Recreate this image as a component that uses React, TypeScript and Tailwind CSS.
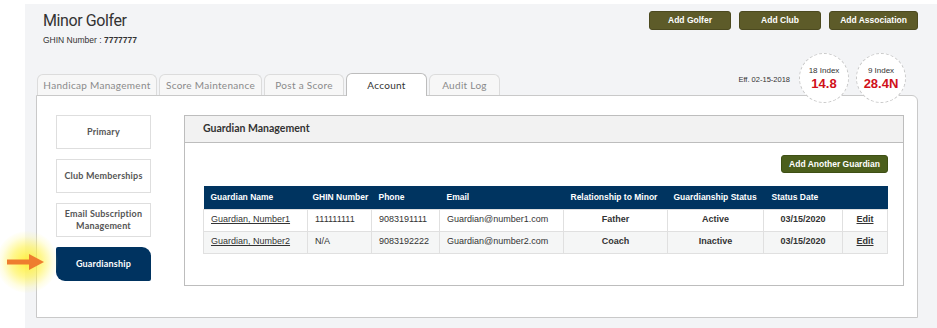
import React from 'react';

const sans = { fontFamily: 'Lato, "Noto Sans", sans-serif' };
const arial = { fontFamily: '"Liberation Sans", Arial, sans-serif' };

type Guardian = {
  name: string;
  ghin: string;
  phone: string;
  email: string;
  relationship: string;
  status: string;
  date: string;
};

const guardians: Guardian[] = [
  { name: 'Guardian, Number1', ghin: '111111111', phone: '9083191111', email: 'Guardian@number1.com', relationship: 'Father', status: 'Active', date: '03/15/2020' },
  { name: 'Guardian, Number2', ghin: 'N/A', phone: '9083192222', email: 'Guardian@number2.com', relationship: 'Coach', status: 'Inactive', date: '03/15/2020' },
];

const tabs = [
  { label: 'Handicap Management', w: 'w-[120px]' },
  { label: 'Score Maintenance', w: 'w-[103px]' },
  { label: 'Post a Score', w: 'w-[80px]' },
  { label: 'Account', w: 'w-[81px]', active: true },
  { label: 'Audit Log', w: 'w-[71px]' },
];

const navItems = [['Primary'], ['Club Memberships'], ['Email Subscription', 'Management'], ['Guardianship']];

function IndexCircle({ label, value }: { label: string; value: string }) {
  return (
    <div className="w-[50px] h-[50px] rounded-full border border-dashed border-[#c8c8c8] bg-white flex flex-col items-center justify-center" style={arial}>
      <div className="text-[8px] leading-[10px] text-[#333]">{label}</div>
      <div className="text-[13px] leading-[15px] font-bold text-[#d0101a]">{value}</div>
    </div>
  );
}

function Arrow() {
  return (
    <div className="absolute left-0 top-[228px] w-[64px] h-[66px] pointer-events-none">
      <div className="absolute left-[-4px] top-[3px] w-[62px] h-[62px] rounded-full bg-[radial-gradient(circle,rgba(255,238,40,0.9)_0%,rgba(255,242,70,0.6)_35%,rgba(255,248,140,0.25)_58%,rgba(255,250,160,0)_72%)]" />
      <svg className="absolute left-[7px] top-[26px]" width="37" height="16" viewBox="0 0 37 16">
        <rect x="0" y="5.5" width="24" height="5" fill="#ee7d2f" />
        <polygon points="22,0 37,8 22,16" fill="#ee7d2f" />
      </svg>
    </div>
  );
}

function App() {
  return (
    <div className="relative w-[937px] h-[328px] bg-white overflow-hidden">
      <div className="ml-[25px] mt-[4px] h-[324px] bg-[#f3f4f6] pt-[7px] pl-[11px] pr-[19px]">
        {/* header */}
        <div className="flex justify-between h-[42px]">
          <div className="pl-[7px]">
            <div className="text-[16px] leading-[20px] tracking-[-0.4px] text-[#333]" style={{ fontFamily: 'Roboto, sans-serif' }}>Minor Golfer</div>
            <div className="mt-[3px] text-[8.5px] leading-[12px] text-[#333]" style={arial}>
              GHIN Number : <span className="font-bold">7777777</span>
            </div>
          </div>
          <div className="flex gap-[8px]" style={arial}>
            <button className="w-[82px] h-[19px] rounded-[3px] bg-[#5d5b29] border border-[#4c4a20] text-white text-[8.5px] font-bold">Add Golfer</button>
            <button className="w-[82px] h-[19px] rounded-[3px] bg-[#5d5b29] border border-[#4c4a20] text-white text-[8.5px] font-bold">Add Club</button>
            <button className="w-[89px] h-[19px] rounded-[3px] bg-[#5d5b29] border border-[#4c4a20] text-white text-[8.5px] font-bold">Add Association</button>
          </div>
        </div>

        {/* tabs + index */}
        <div className="flex items-end justify-between">
          <div className="flex items-end gap-[2px] ml-[1px]" style={sans}>
            {tabs.map((t) =>
              t.active ? (
                <div key={t.label} className={`${t.w} h-[23px] mb-[-1px] relative z-10 bg-white border border-b-0 border-[#bdbdbd] rounded-t-[6px] flex items-center justify-center text-[10px] tracking-[0.3px] text-[#333]`}>
                  {t.label}
                </div>
              ) : (
                <div key={t.label} className={`${t.w} h-[21px] bg-[#f7f7f7] border border-b-0 border-[#dcdcdc] rounded-t-[6px] flex items-center justify-center text-[10px] tracking-[0.3px] text-[#8a8a8a]`}>
                  {t.label}
                </div>
              )
            )}
          </div>
          <div className="flex items-center mb-[-8px] mr-[12px] relative z-20">
            <div className="text-[7.5px] text-[#333] mr-[9px] mt-[4px]" style={arial}>Eff. 02-15-2018</div>
            <IndexCircle label="18 Index" value="14.8" />
            <div className="w-[7px]" />
            <IndexCircle label="9 Index" value="28.4N" />
          </div>
        </div>

        {/* panel */}
        <div className="h-[223px] bg-white border border-[#c9c9c9] rounded-tr-[6px] flex pl-[19px] pt-[19px] pr-[14px]">
          <div className="w-[95px] flex flex-col gap-[10px] shrink-0" style={sans}>
            {navItems.map((lines) => {
              const key = lines.join(' ');
              return key === 'Guardianship' ? (
                <div key={key} className="h-[34px] bg-[#003360] rounded-tr-[9px] rounded-bl-[9px] rounded-tl-[2px] rounded-br-[2px] flex items-center justify-center text-[9px] font-bold tracking-[0.2px] text-white">
                  {key}
                </div>
              ) : (
                <div key={key} className="h-[34px] bg-white border border-[#dedede] flex flex-col items-center justify-center text-center text-[9px] leading-[12px] font-bold tracking-[0.2px] text-[#555] whitespace-nowrap">
                  {lines.map((l) => (
                    <span key={l}>{l}</span>
                  ))}
                </div>
              );
            })}
          </div>

          <div className="ml-[33px] flex-1 h-[171px] border border-[#bdbdbd]">
            <div className="h-[27px] bg-[#f2f2f2] border-b border-[#bdbdbd] flex items-center pl-[18px] text-[10.5px] font-bold text-[#333]" style={sans}>
              Guardian Management
            </div>
            <div className="pl-[18px] pr-[15px] pt-[12px]" style={arial}>
              <div className="flex justify-end">
                <button className="w-[107px] h-[18px] rounded-[3px] bg-[#4b5e1c] border border-[#3e4f14] text-white text-[8.5px] font-bold">Add Another Guardian</button>
              </div>
              <table className="mt-[13px] w-[684px] border-collapse table-fixed text-[9px]">
                <colgroup>
                  <col className="w-[104px]" />
                  <col className="w-[64px]" />
                  <col className="w-[68px]" />
                  <col className="w-[124px]" />
                  <col className="w-[104px]" />
                  <col className="w-[96px]" />
                  <col className="w-[79px]" />
                  <col className="w-[45px]" />
                </colgroup>
                <thead>
                  <tr className="h-[23px] bg-[#003460] text-white text-[8.5px] font-bold text-left">
                    <th className="pl-[7px] font-bold">Guardian Name</th>
                    <th className="pl-[5px] font-bold">GHIN Number</th>
                    <th className="pl-[7px] font-bold">Phone</th>
                    <th className="pl-[7px] font-bold">Email</th>
                    <th className="pl-[7px] font-bold">Relationship to Minor</th>
                    <th className="pl-[6px] font-bold">Guardianship Status</th>
                    <th className="pl-[8px] font-bold">Status Date</th>
                    <th />
                  </tr>
                </thead>
                <tbody className="text-[#333]">
                  {guardians.map((g, i) => (
                    <tr key={g.name} className={`h-[22px] ${i % 2 === 1 ? 'bg-[#f5f6f6]' : 'bg-white'}`}>
                      <td className="pl-[7px] border border-[#e0e0e0] underline">{g.name}</td>
                      <td className="pl-[7px] border border-[#e0e0e0]">{g.ghin}</td>
                      <td className="pl-[7px] border border-[#e0e0e0]">{g.phone}</td>
                      <td className="pl-[7px] border border-[#e0e0e0]">{g.email}</td>
                      <td className="text-center font-bold border border-[#e0e0e0]">{g.relationship}</td>
                      <td className="text-center font-bold border border-[#e0e0e0]">{g.status}</td>
                      <td className="text-center font-bold border border-[#e0e0e0]">{g.date}</td>
                      <td className="text-center font-bold underline border border-[#e0e0e0]">Edit</td>
                    </tr>
                  ))}
                </tbody>
              </table>
            </div>
          </div>
        </div>
      </div>
      <Arrow />
    </div>
  );
}

export default App;
